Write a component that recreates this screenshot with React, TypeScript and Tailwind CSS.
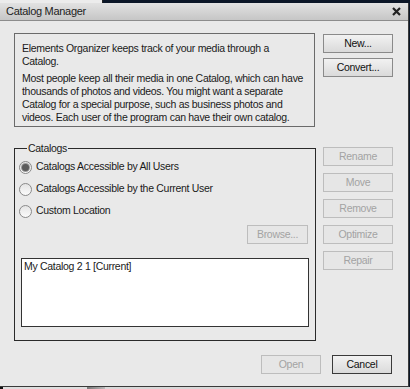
import type { ReactNode } from 'react'

const FONT = { fontFamily: '"Liberation Sans", Arial, sans-serif' }

function Btn({ children, disabled, strong, w = 'w-[70px]' }: { children: ReactNode; disabled?: boolean; strong?: boolean; w?: string }) {
  const tone = disabled
    ? 'border-[#bdbdbd] bg-[#e6e6e6] text-[#a3a3a3]'
    : strong
      ? 'border-[#3a3a3a] bg-gradient-to-b from-[#f2f2f2] to-[#dadada] text-[#111]'
      : 'border-[#8a8a8a] bg-gradient-to-b from-[#f2f2f2] to-[#dadada] text-[#111]'
  return (
    <button className={`${w} h-[19px] border ${tone} flex items-center justify-center leading-none`}>
      {children}
    </button>
  )
}

function Radio({ checked, label }: { checked?: boolean; label: string }) {
  return (
    <label className="h-[22px] flex items-center gap-[4px]">
      <span className="w-[13px] h-[13px] rounded-full border border-[#8a8a8a] bg-gradient-to-b from-[#e4e4e4] to-[#fbfbfb] flex items-center justify-center">
        {checked && <span className="w-[7px] h-[7px] rounded-full bg-[#5c5c5c] ring-1 ring-[#9a9a9a]" />}
      </span>
      <span>{label}</span>
    </label>
  )
}

export default function App() {
  return (
    <div className="w-[410px] h-[389px] bg-[#0b1627] flex flex-col text-[10.5px] tracking-[-0.3px] text-[#1a1a1a] overflow-hidden" style={FONT}>
      {/* strip of the window behind */}
      <div className="h-[3px] flex">
        <div className="w-[103px] bg-[#ececec] border-r border-[#222]" />
        <div className="flex-1 bg-[#0b1627]" />
      </div>

      <div className="w-[409px] h-[384px] bg-[#e9e9e9] border-r border-b border-[#3a3a3a] flex flex-col">
        {/* title bar */}
        <div className="h-[18px] flex items-center justify-between pl-[6px] pr-[7px] bg-gradient-to-b from-[#e2e2e2] to-[#c6c6c6] border-b border-[#8c8c8c]">
          <span className="text-[11px] text-[#222]">Catalog Manager</span>
          <svg width="9" height="9" viewBox="0 0 9 9">
            <path d="M1 1 L8 8 M8 1 L1 8" stroke="#222" strokeWidth="2.2" />
          </svg>
        </div>

        <div className="flex-1 flex flex-col pl-[14px] pr-[16px] pt-[12px]">
          <div className="grid grid-cols-[301px_69px] gap-x-[8px]">
            {/* description */}
            <div className="h-[94px] border border-[#6a6a6a] pl-[7px] pt-[8px] leading-[13px] whitespace-nowrap">
              <p>
                Elements Organizer keeps track of your media through a<br />
                Catalog.
              </p>
              <p className="mt-[4px]">
                Most people keep all their media in one Catalog, which can have<br />
                thousands of photos and videos. You might want a separate<br />
                Catalog for a special purpose, such as business photos and<br />
                videos. Each user of the program can have their own catalog.
              </p>
            </div>
            <div className="flex flex-col gap-[5px] pt-[1px]">
              <Btn>New...</Btn>
              <Btn>Convert...</Btn>
            </div>

            {/* catalogs group */}
            <fieldset className="mt-[15px] h-[199px] border border-[#2a2a2a] px-[6px] pb-[12px]">
              <legend className="ml-[6px] px-[1px] leading-[13px]">Catalogs</legend>
              <div className="flex flex-col pt-[1px] -ml-[2px]">
                <Radio checked label="Catalogs Accessible by All Users" />
                <Radio label="Catalogs Accessible by the Current User" />
                <Radio label="Custom Location" />
              </div>
              <div className="flex justify-end mt-[3px] pr-[1px]">
                <Btn disabled w="w-[61px]">Browse...</Btn>
              </div>
              <div className="mt-[14px] h-[69px] w-[288px] bg-white border border-[#333] px-[2px] pt-[1px] leading-[13px]">
                My Catalog 2 1 [Current]
              </div>
            </fieldset>
            <div className="flex flex-col gap-[7px] mt-[20px]">
              <Btn disabled>Rename</Btn>
              <Btn disabled>Move</Btn>
              <Btn disabled>Remove</Btn>
              <Btn disabled>Optimize</Btn>
              <Btn disabled>Repair</Btn>
            </div>
          </div>

          {/* footer */}
          <div className="flex justify-end gap-[11px] mt-[14px]">
            <Btn disabled w="w-[60px]">Open</Btn>
            <Btn strong w="w-[60px]">Cancel</Btn>
          </div>
        </div>
      </div>

      <div className="h-[2px] flex">
        <div className="w-[3px] bg-[#111]" />
        <div className="w-[84px] bg-[#dedede]" />
        <div className="w-[18px] bg-gradient-to-r from-[#777] to-[#bbb]" />
        <div className="flex-1 bg-[#d8d8d8]" />
      </div>
    </div>
  )
}
